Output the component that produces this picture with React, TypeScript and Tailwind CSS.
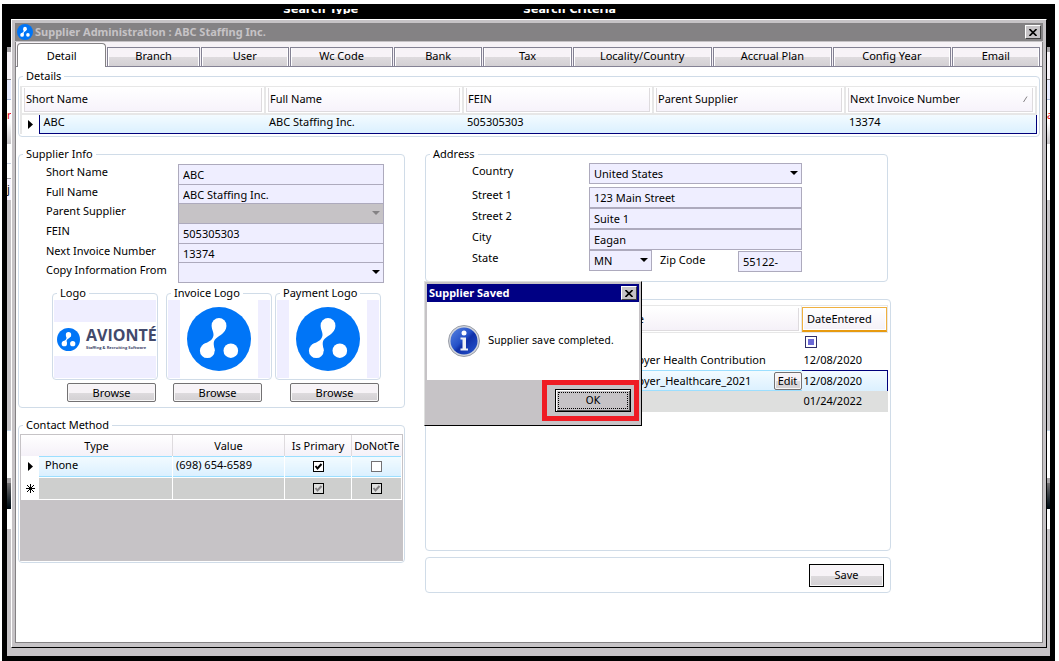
import React, { useState } from 'react';

const tabs = [
  { name: 'Branch', grow: 'flex-[93]' },
  { name: 'User', grow: 'flex-[89]' },
  { name: 'Wc Code', grow: 'flex-[104]' },
  { name: 'Bank', grow: 'flex-[89]' },
  { name: 'Tax', grow: 'flex-[89]' },
  { name: 'Locality/Country', grow: 'flex-[141]' },
  { name: 'Accrual Plan', grow: 'flex-[121]' },
  { name: 'Config Year', grow: 'flex-[119]' },
  { name: 'Email', grow: 'flex-[89]' },
];

const gridHeads = ['Short Name', 'Full Name', 'FEIN', 'Parent Supplier', 'Next Invoice Number'];

const fieldClass = 'block h-[21px] w-full rounded-none border border-[#adaabd] bg-[#efeeff] px-1 text-[11px] text-black outline-none';

function Brand({ className }: { className: string }) {
  return (
    <svg viewBox="0 0 64 64" className={className} aria-hidden="true">
      <circle cx="32" cy="32" r="32" fill="#0075f7" />
      <g fill="#fff">
        <circle cx="32" cy="18.500" r="7.400" />
        <circle cx="20.300" cy="43.700" r="7.400" />
        <circle cx="43.800" cy="43.700" r="7.300" />
        <path d="M24.700 19.500 C25 24 28.500 27.500 25 32 C22 35.500 18.500 35.500 15.500 38 L27.700 44 C27.500 39 25 35 29 31.500 C33 28 38.500 26 39.400 19.500 Z" />
      </g>
    </svg>
  );
}

function Cross() {
  return (
    <svg viewBox="0 0 8 7" className="h-[7px] w-2" aria-hidden="true">
      <path d="M0.500 0 L7.500 7 M7.500 0 L0.500 7" stroke="#000" strokeWidth="1.600" />
    </svg>
  );
}

function Pointer() {
  return (
    <svg viewBox="0 0 5 9" className="ml-auto mr-1.5 h-[9px] w-[5px]" aria-hidden="true">
      <path d="M0 0 L5 4.500 L0 9 Z" fill="#000" />
    </svg>
  );
}

function Group({ title, className = '', children }: { title: string; className?: string; children: React.ReactNode }) {
  return (
    <fieldset className={'min-w-0 rounded-[4px] border border-[#d0dce8] ' + className}>
      <legend className="ml-1 px-[3px] leading-[14px]">{title}</legend>
      {children}
    </fieldset>
  );
}

function Field({ id, label, value, disabled, combo, height = 'h-5' }: {
  id: string;
  label: string;
  value: string;
  disabled?: boolean;
  combo?: boolean;
  height?: string;
}) {
  return (
    <div className={'flex ' + height}>
      <label htmlFor={id} className="w-[132px] shrink-0 leading-4">{label}</label>
      <div className="flex-1">
        {combo ? <Combo id={id} value={value} disabled={disabled} /> : <input id={id} defaultValue={value} className={fieldClass} />}
      </div>
    </div>
  );
}

function Combo({ id, value, disabled }: { id: string; value: string; disabled?: boolean }) {
  return (
    <div className="relative">
      <select id={id} disabled={disabled} className={fieldClass + ' appearance-none disabled:bg-[#c6c3c6] disabled:opacity-100'}>
        <option>{value}</option>
      </select>
      <svg viewBox="0 0 8 4" className="pointer-events-none absolute right-1 top-2 h-1 w-2" aria-hidden="true">
        <path d="M0 0 H8 L4 4 Z" fill={disabled ? '#848284' : '#000'} />
      </svg>
    </div>
  );
}

function GreyButton({ children, className = '' }: { children: React.ReactNode; className?: string }) {
  return (
    <button
      type="button"
      className={'border bg-linear-to-b from-[#f7f3f7] from-50% via-[#dedbde] via-50% to-[#d3d0d3] shadow-[inset_0_0_0_1px_#f7f7f7] ' + className}
    >
      {children}
    </button>
  );
}

function LogoBox({ title, button, children }: { title: string; button: string; children: React.ReactNode }) {
  return (
    <div className="w-[106px]">
      <Group title={title}>
        <div className="mx-px mb-px flex h-[78px] items-center justify-center bg-[#efeeff]">{children}</div>
      </Group>
      <GreyButton className={'mt-[3px] h-[19px] w-[89px] rounded-[2px] border-[#737173] leading-4 ' + button}>Browse</GreyButton>
    </div>
  );
}

function Check({ label, checked, disabled }: { label: string; checked: boolean; disabled?: boolean }) {
  return (
    <span className="relative mx-auto block h-[11px] w-[11px]">
      <input
        type="checkbox"
        aria-label={label}
        defaultChecked={checked}
        disabled={disabled}
        className="peer block h-[11px] w-[11px] appearance-none border border-[#737173] bg-white checked:border-black disabled:bg-[#dedfde]"
      />
      <svg viewBox="0 0 11 11" className="pointer-events-none absolute inset-0 hidden h-[11px] w-[11px] peer-checked:block" aria-hidden="true">
        <path d="M2.500 5 L4.500 7.500 L8.500 3" fill="none" stroke={disabled ? '#848284' : '#000'} strokeWidth="2" />
      </svg>
    </span>
  );
}

function DetailsGrid() {
  return (
    <table className="w-full table-fixed border-collapse text-left">
      <colgroup>
        <col className="w-[18px]" />
        <col className="w-[226px]" />
        <col className="w-[198px]" />
        <col className="w-[190px]" />
        <col className="w-[192px]" />
        <col />
      </colgroup>
      <thead>
        <tr className="h-[27px]">
          {gridHeads.map((head, i) => (
            <th key={head} colSpan={i === 0 ? 2 : 1} className="border-2 border-t border-[#e7e7e7] p-0 font-normal">
              <div className="mx-0.5 flex h-6 items-center justify-between border-x border-b border-[#dedbde] bg-linear-to-b from-white to-[#f7f3fb] pl-px pr-1">
                {head}
                {i === 4 && (
                  <svg viewBox="0 0 5 6" className="h-1.5 w-[5px]" aria-hidden="true">
                    <path d="M0.500 6 L4 0.500" stroke="#848284" />
                  </svg>
                )}
              </div>
            </th>
          ))}
        </tr>
      </thead>
      <tbody>
        <tr className="h-5">
          <td className="border-l-2 border-[#e7e7e7] p-0"><Pointer /></td>
          {['ABC', 'ABC Staffing Inc.', '505305303', '', '13374'].map((cell, i) => (
            <td
              key={i}
              className="border-b border-t border-b-[#00007b] border-t-[#9cdfff] bg-linear-to-b from-[#f3fbff] to-[#dbf0ff] p-0 pb-1 pl-1 leading-3 last:border-r last:border-r-[#00007b] nth-2:border-l nth-2:border-l-[#00007b]"
            >
              {cell}
            </td>
          ))}
        </tr>
      </tbody>
    </table>
  );
}

function ContactGrid() {
  const cell = 'border-r border-white p-0 ';
  return (
    <div className="mx-px mb-px mt-0.5 h-[127px] border border-[#c6c3c6] bg-[#c6c3c6]">
      <table className="w-full table-fixed border-collapse">
        <colgroup>
          <col className="w-[18px]" />
          <col />
          <col className="w-28" />
          <col className="w-[67px]" />
          <col className="w-[50px]" />
        </colgroup>
        <thead>
          <tr className="h-[21px] bg-linear-to-b from-white to-[#f5f1f8]">
            <th colSpan={2} className="border-r border-[#dedbde] p-0 font-normal">Type</th>
            <th className="border-r border-[#dedbde] p-0 font-normal">Value</th>
            <th className="border-r border-[#dedbde] p-0 font-normal">Is Primary</th>
            <th className="overflow-hidden whitespace-nowrap p-0 font-normal">DoNotTe</th>
          </tr>
        </thead>
        <tbody>
          <tr className="h-[21px] border-b border-white bg-linear-to-b from-[#f3fbff] to-[#dbf0ff] shadow-[inset_0_0_0_1px_#9cdfff]">
            <td className="bg-white p-0"><Pointer /></td>
            <td className={cell + 'pb-0.5 pl-1.5'}>Phone</td>
            <td className={cell + 'pb-0.5 pl-[3px]'}>(698) 654-6589</td>
            <td className={cell}><Check label="Is Primary" checked /></td>
            <td className={cell}><Check label="DoNotText" checked={false} /></td>
          </tr>
          <tr className="h-[22px] border-b border-white bg-[#cecfce]">
            <td className="bg-white p-0">
              <svg viewBox="0 0 9 9" className="ml-auto mr-1 h-[9px] w-[9px]" aria-hidden="true">
                <path d="M4.500 0 V9 M0 4.500 H9 M1 1 L8 8 M8 1 L1 8" stroke="#000" />
              </svg>
            </td>
            <td className={cell} />
            <td className={cell} />
            <td className={cell}><Check label="New row Is Primary" checked disabled /></td>
            <td className={cell}><Check label="New row DoNotText" checked disabled /></td>
          </tr>
        </tbody>
      </table>
    </div>
  );
}

function PackageGrid() {
  return (
    <table className="w-full table-fixed border-collapse text-left">
      <colgroup>
        <col />
        <col className="w-[190px]" />
        <col className="w-[86px]" />
      </colgroup>
      <thead>
        <tr className="h-[27px]">
          <th className="border border-[#e7e7e7] p-0" />
          <th className="border border-[#e7e7e7] p-0 font-normal">
            <div className="mr-0.5 flex h-[23px] items-center border-b border-r border-[#dedbde] bg-linear-to-b from-white to-[#f5f1f8] pl-px">Name</div>
          </th>
          <th className="border border-[#e7e7e7] p-0 font-normal">
            <div className="flex h-[25px] items-center border border-b-2 border-[#f0b040] border-b-[#e79a10] bg-linear-to-b from-white to-[#f5f1f8] pl-1 shadow-[inset_0_0_0_1px_#fff]">
              DateEntered
            </div>
          </th>
        </tr>
      </thead>
      <tbody>
        <tr className="h-[18px]">
          <td className="p-0" />
          <td className="p-0" />
          <td className="p-0 pl-[3px]">
            <span className="flex h-3 w-3 items-center justify-center border border-[#31306b] bg-white">
              <span className="h-1.5 w-1.5 bg-[#6b69d6]" />
            </span>
          </td>
        </tr>
        <tr className="h-5">
          <td className="p-0" />
          <td className="whitespace-nowrap p-0">Employer Health Contribution</td>
          <td className="p-0 pl-0.5">12/08/2020</td>
        </tr>
        <tr className="h-5 bg-linear-to-b from-[#f3fbff] to-[#dbf0ff]">
          <td className="border-y border-[#9cdfff] p-0" />
          <td className="border-y border-[#9cdfff] p-0">
            <div className="flex h-[18px] items-center justify-between">
              Employer_Healthcare_2021
              <GreyButton className="h-[18px] w-7 rounded-[2px] border-[#737173]">Edit</GreyButton>
            </div>
          </td>
          <td className="border-r border-t border-[#00007b] p-0 pl-0.5">12/08/2020</td>
        </tr>
        <tr className="h-[21px] bg-[#dedfde]">
          <td className="p-0" />
          <td className="p-0" />
          <td className="p-0 pl-0.5">01/24/2022</td>
        </tr>
      </tbody>
    </table>
  );
}

function SavedDialog({ onClose }: { onClose: () => void }) {
  return (
    <div
      role="dialog"
      aria-labelledby="saved-title"
      className="absolute left-[408px] top-[214px] w-[218px] border border-b-black border-l-[#dedfde] border-r-black border-t-[#dedfde] bg-[#c6c3c6] p-0.5 font-['DejaVu_Sans_Condensed','Liberation_Sans',sans-serif]"
    >
      <div className="flex h-[18px] items-center justify-between bg-[#000084] px-0.5 text-white">
        <h2 id="saved-title" className="font-['Noto_Sans',sans-serif] font-bold">Supplier Saved</h2>
        <button
          type="button"
          aria-label="Close message"
          onClick={onClose}
          className="flex h-3.5 w-4 items-center justify-center border border-b-[#404040] border-l-white border-r-[#404040] border-t-white bg-[#c6c3c6]"
        >
          <Cross />
        </button>
      </div>
      <div className="flex h-[78px] items-center bg-white pl-[21px]">
        <svg viewBox="0 0 32 32" className="mr-2 h-8 w-8 shrink-0" aria-hidden="true">
          <defs>
            <linearGradient id="info" x1="0" y1="0" x2="1" y2="1">
              <stop offset="0" stopColor="#5a86e0" />
              <stop offset="0.450" stopColor="#2450c8" />
              <stop offset="0.550" stopColor="#1030a8" />
              <stop offset="1" stopColor="#2858d0" />
            </linearGradient>
          </defs>
          <circle cx="16" cy="16" r="15.500" fill="#d0d4dc" stroke="#9a9ea8" />
          <circle cx="16" cy="16" r="13.500" fill="url(#info)" />
          <circle cx="16" cy="8" r="2.500" fill="#fff" />
          <path d="M12.500 12.500 H18 V23.500 H20 V25.500 H12.500 V23.500 H14.500 V14.500 H12.500 Z" fill="#eef0f6" />
        </svg>
        <p className="whitespace-nowrap">Supplier save completed.</p>
      </div>
      <div className="flex h-[43px] justify-end">
        <div className="h-[41px] w-[97px] border-[5px] border-[#ef1c24] px-2 py-1">
          <button
            type="button"
            onClick={onClose}
            className="h-[23px] w-[76px] border border-black bg-[#c6c3c6] p-0.5 shadow-[inset_1px_1px_0_#fff,inset_-1px_-1px_0_#555]"
          >
            <span className="flex h-full items-center justify-center border border-dotted border-black">OK</span>
          </button>
        </div>
      </div>
    </div>
  );
}

export default function App() {
  const [open, setOpen] = useState(true);

  return (
    <div className="flex min-h-screen flex-col bg-white pl-0.5 pr-1 pt-1 font-['Noto_Sans',sans-serif] text-[11px] leading-[14px] text-black">
      <div className="flex flex-1 flex-col border-x-[5px] border-b-[5px] border-black bg-[#c6c3c6]">
        <div className="h-[15px] bg-black pl-[276px] pt-[5px]">
          <div className="flex h-[5px] items-end overflow-hidden text-[11px] font-bold text-white font-['DejaVu_Sans',sans-serif]">
            <span className="w-60 leading-[9px]">Search Type</span>
            <span className="leading-[9px]">Search Criteria</span>
          </div>
        </div>

        <div className="mb-2 flex flex-1">
          {/* page behind the window, left edge */}
          <div className="flex w-1 flex-col overflow-hidden">
            <div className="h-7 bg-black" />
            <div className="h-[5px] bg-[#a5a2a5]" />
            <div className="h-7 border-b border-[#848284] bg-[#f7f3f7]" />
            <div className="h-5 border-b border-[#a5b6d6] bg-[#e7ebff]" />
            <div className="h-11 bg-linear-to-b from-white from-50% to-[#c6c3c6] pt-2 text-red-600">r</div>
            <div className="h-5 border-b border-[#c6cfde] bg-white" />
            <div className="h-[15px] border-b border-[#a5a2a5] bg-white" />
            <div className="h-[21px] bg-[#f7f3ff] leading-5">j</div>
            <div className="h-[230px] bg-[#c6c3c6]" />
            <div className="h-12 border-t border-[#c6d7e7] bg-white" />
            <div className="h-[5px] bg-[#a5a2a5]" />
            <div className="h-[26px] bg-linear-to-b from-[#737173] to-[#000810]" />
            <div className="h-5 bg-white" />
          </div>

          <div className="min-w-0 flex-1 border border-b-black border-l-white border-r-black border-t-white bg-[#c6c3c6] p-[3px]">
            <header className="flex h-[18px] items-center bg-[#848284] px-0.5">
              <Brand className="mr-0.5 h-4 w-4" />
              <h1 className="flex-1 font-bold text-[#c6c3c6]">Supplier Administration : ABC Staffing Inc.</h1>
              <button
                type="button"
                aria-label="Close"
                className="flex h-3.5 w-4 items-center justify-center border border-b-[#404040] border-l-white border-r-[#404040] border-t-white bg-[#c6c3c6]"
              >
                <Cross />
              </button>
            </header>

            <div className="mt-px flex h-[601px] flex-col border-x border-b border-[#848284] bg-white">
              <nav className="flex h-[25px] items-end border-b border-[#848294] bg-[#f7f3f7] pl-px pr-0.5">
                <button type="button" className="-mb-px h-6 flex-[90] rounded-t-[4px] border-x border-t border-[#848284] bg-white">Detail</button>
                {tabs.map((tab) => (
                  <button
                    key={tab.name}
                    type="button"
                    className={'ml-px h-[19px] border border-b-0 border-[#848294] bg-linear-to-b from-[#f7f3f7] from-50% via-[#dedbde] via-50% to-[#d3d0d3] pb-0.5 shadow-[inset_-1px_0_0_#fff,inset_1px_0_0_#fff] ' + tab.grow}
                  >
                    {tab.name}
                  </button>
                ))}
              </nav>

              <main className="relative flex-1 px-0.5 pt-0.5">
                <Group title="Details">
                  <div className="mb-0.5 ml-px mr-0.5 mt-[3px]">
                    <DetailsGrid />
                  </div>
                </Group>

                <div className="mt-2.5 flex items-start gap-5">
                  <div className="w-[387px]">
                    <Group title="Supplier Info">
                      <div className="mt-[3px] pl-[27px] pr-5">
                        <Field id="short" label="Short Name" value="ABC" />
                        <Field id="full" label="Full Name" value="ABC Staffing Inc." height="h-[19px]" />
                        <Field id="parent" label="Parent Supplier" value="" combo disabled />
                        <Field id="fein" label="FEIN" value="505305303" />
                        <Field id="invoice" label="Next Invoice Number" value="13374" height="h-[19px]" />
                        <Field id="copy" label="Copy Information From" value="" combo />
                      </div>
                      <div className="mb-[5px] mt-1 flex pl-[33px]">
                        <LogoBox title="Logo" button="ml-[15px]">
                          <div className="flex h-[34px] w-full items-center bg-white pl-[3px]">
                            <Brand className="mr-1.5 h-[23px] w-[23px] shrink-0" />
                            <div className="font-['Open_Sans',sans-serif] text-[#42496b]">
                              <div className="h-[18px] text-base font-bold leading-[18px]">AVIONTÉ</div>
                              <div className="whitespace-nowrap text-[4px] font-bold leading-[8px]">Staffing &amp; Recruiting Software</div>
                            </div>
                          </div>
                        </LogoBox>
                        <div className="w-2" />
                        <LogoBox title="Invoice Logo" button="ml-[7px]">
                          <div className="flex h-[78px] w-[78px] items-center justify-center bg-white"><Brand className="h-16 w-16" /></div>
                        </LogoBox>
                        <div className="w-[3px]" />
                        <LogoBox title="Payment Logo" button="ml-[15px]">
                          <div className="flex h-[78px] w-[78px] items-center justify-center bg-white"><Brand className="h-16 w-16" /></div>
                        </LogoBox>
                      </div>
                    </Group>
                    <Group title="Contact Method" className="mt-2.5">
                      <ContactGrid />
                    </Group>
                  </div>

                  <div className="w-[466px]">
                    <Group title="Address" className="mr-[3px]">
                      <div className="mb-2 mt-0.5 pl-[46px] pr-[85px]">
                        {[
                          { id: 'country', label: 'Country', value: 'United States', combo: true, height: 'h-6' },
                          { id: 'street1', label: 'Street 1', value: '123 Main Street', height: 'h-[21px]' },
                          { id: 'street2', label: 'Street 2', value: 'Suite 1', height: 'h-[21px]' },
                          { id: 'city', label: 'City', value: 'Eagan', height: 'h-[21px]' },
                        ].map(({ id, label, value, combo, height }) => (
                          <div key={id} className={'flex ' + height}>
                            <label htmlFor={id} className="w-[117px] shrink-0 leading-4">{label}</label>
                            <div className="flex-1">
                              {combo ? <Combo id={id} value={value} /> : <input id={id} defaultValue={value} className={fieldClass} />}
                            </div>
                          </div>
                        ))}
                        <div className="flex h-[23px]">
                          <label htmlFor="state" className="w-[117px] shrink-0 leading-4">State</label>
                          <div className="w-[63px]"><Combo id="state" value="MN" /></div>
                          <label htmlFor="zip" className="flex-1 pl-2 leading-5">Zip Code</label>
                          <div className="w-16 pt-px"><input id="zip" defaultValue="55122-" className={fieldClass} /></div>
                        </div>
                      </div>
                    </Group>
                    <section className="mt-[17px] h-[252px] rounded-[4px] border border-[#d0dce8] pl-px pr-0.5 pt-[5px]">
                      <PackageGrid />
                    </section>
                    <section className="mt-1.5 flex h-9 items-center justify-end rounded-[4px] border border-[#d0dce8] pr-1.5">
                      <GreyButton className="h-[23px] w-[75px] border-black">Save</GreyButton>
                    </section>
                  </div>
                </div>

                {open && <SavedDialog onClose={() => setOpen(false)} />}
              </main>
            </div>
          </div>

          {/* page behind the window, right edge */}
          <div className="flex w-[3px] flex-col overflow-hidden">
            <div className="h-7 bg-black" />
            <div className="h-[5px] bg-[#a5a2a5]" />
            <div className="h-7 border-b border-[#848284] bg-[#f7f3f7]" />
            <div className="h-5 border-b border-[#a5b6d6] bg-[#e7ebff]" />
            <div className="h-11 bg-linear-to-b from-white from-50% to-[#c6c3c6] pt-2 text-red-600">a</div>
            <div className="h-14 bg-white" />
            <div className="h-[230px] bg-[#c6c3c6]" />
            <div className="h-12 border-t border-[#c6d7e7] bg-white" />
            <div className="h-[5px] bg-[#a5a2a5]" />
            <div className="h-[26px] bg-linear-to-b from-[#737173] to-[#000810]" />
            <div className="h-5 bg-white" />
          </div>
        </div>
      </div>
    </div>
  );
}
